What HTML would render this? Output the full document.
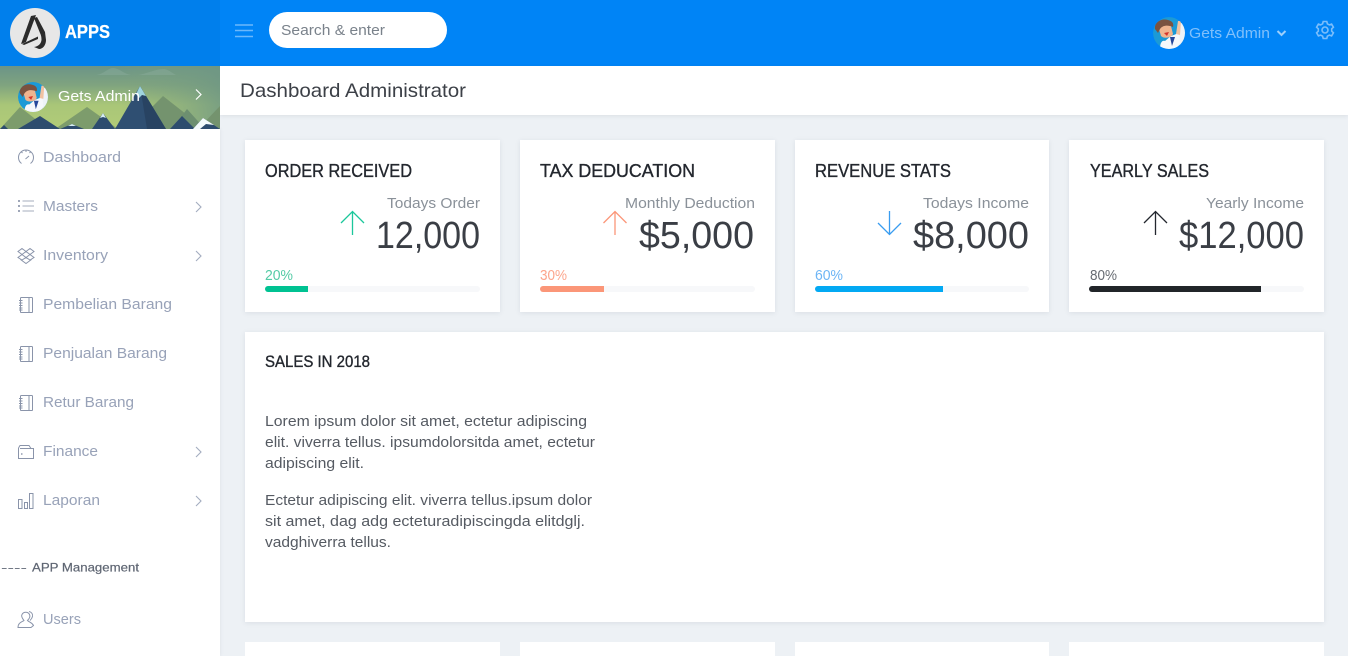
<!DOCTYPE html>
<html lang="en">
<head>
<meta charset="utf-8">
<title>Dashboard Administrator</title>
<style>
html,body{margin:0;padding:0;width:1348px;height:656px;overflow:hidden;background:#edf1f5}
#root{position:relative;width:1348px;height:656px;overflow:hidden;background:#edf1f5}
.a{position:absolute}
.card{position:absolute;background:#fff;box-shadow:0 1px 5px rgba(60,70,90,.10)}
svg text{font-family:"Liberation Sans",sans-serif}
.m{font-size:14.5px;fill:#98a2b8}
.t{font-size:18.5px;fill:#23272e;stroke:#23272e;stroke-width:.35}
.s{font-size:14.5px;fill:#8a9199}
.n{font-size:38px;fill:#3a3e45}
.p{font-size:14.5px}
.b{font-size:14.5px;fill:#555a62}
.i{fill:none;stroke:#8a94aa;stroke-width:1}
.c{fill:none;stroke:#a4adc0;stroke-width:1.1}
</style>
</head>
<body>
<div id="root">
<div class="a" style="left:220px;top:0;width:1128px;height:66px;background:#0084f6"></div>
<div class="a" style="left:0;top:0;width:220px;height:66px;background:#007fec"></div>
<div class="a" style="left:220px;top:66px;width:1128px;height:49px;background:#fff;box-shadow:0 1px 4px rgba(60,70,90,.10)"></div>
<div class="a" style="left:0;top:129px;width:220px;height:527px;background:#fff;box-shadow:1px 0 3px rgba(60,70,90,.06)"></div>
<div class="a" style="left:269px;top:12px;width:178px;height:36px;border-radius:18px;background:#fff"></div>
<div class="card" style="left:245px;top:140px;width:255px;height:172px"></div>
<div class="card" style="left:520px;top:140px;width:255px;height:172px"></div>
<div class="card" style="left:795px;top:140px;width:254px;height:172px"></div>
<div class="card" style="left:1069px;top:140px;width:255px;height:172px"></div>
<div class="card" style="left:245px;top:332px;width:1079px;height:290px"></div>
<div class="card" style="left:245px;top:642px;width:255px;height:14px;box-shadow:none"></div>
<div class="card" style="left:520px;top:642px;width:255px;height:14px;box-shadow:none"></div>
<div class="card" style="left:795px;top:642px;width:254px;height:14px;box-shadow:none"></div>
<div class="card" style="left:1069px;top:642px;width:255px;height:14px;box-shadow:none"></div>

<svg class="a" style="left:0;top:0" width="1348" height="656" viewBox="0 0 1348 656" xmlns="http://www.w3.org/2000/svg">
<defs>
<linearGradient id="sky" x1="0" y1="0" x2="0" y2="1">
<stop offset="0" stop-color="#6b9488"/><stop offset=".3" stop-color="#7fa37f"/><stop offset=".62" stop-color="#a9c678"/><stop offset="1" stop-color="#b2cc78"/>
</linearGradient>
<linearGradient id="skyr" x1="0" y1="0" x2="1" y2="0">
<stop offset="0" stop-color="#7fa37f" stop-opacity="0"/><stop offset=".55" stop-color="#7fa37f" stop-opacity="0"/><stop offset="1" stop-color="#6f9784" stop-opacity=".8"/>
</linearGradient>
<clipPath id="ban"><rect x="0" y="66" width="220" height="63"/></clipPath>
<clipPath id="av1"><circle cx="33" cy="97" r="15"/></clipPath>
<clipPath id="av2"><circle cx="1169" cy="33" r="16"/></clipPath>
<g id="kid">
<circle cx="0" cy="0" r="16" fill="#1b9ad6"/>
<path d="M11 -10L16 -10V16H4Z" fill="#eef3f8"/>
<path d="M-9 16C-9 10 -7 7 -4 8L2 3L10 0L11 10L6 16Z" fill="#f6f8fb"/>
<path d="M1 4L3 13L6 4Z" fill="#27479a"/>
<path d="M-10 -4C-8 -8 -2 -9 2 -7L4 1C2 5 -5 6 -8 3Z" fill="#f0b48f"/>
<path d="M-14 -4C-15 -11 -7 -15 -1 -13C3 -12 5 -10 4 -6C-1 -8 -6 -8 -9 -4L-11 0Z" fill="#7a5240"/>
<path d="M-5 0L0 -1L-2 3Z" fill="#d5352b"/>
<path d="M7 1L9 -12L12 -12L11 2Z" fill="#f0c2a2"/>
</g>
<g id="book" class="i">
<rect x="20.5" y=".5" width="12" height="15" rx=".8"/>
<path d="M29 .5V15.5M19 3.5H22.5M19 6H22.5M19 8.5H22.5M19 11H22.5M19 13H22.5" />
</g>
<path id="chev" d="M-3 -5L2 0L-3 5" fill="none"/>
</defs>

<!-- logo -->
<circle cx="35" cy="33" r="25" fill="#e7e7e7"/>
<path d="M31 16L36 15L26 42L21 44Z" fill="#2b2b2b"/>
<path d="M22 44L38 36.5L38 39L24 45Z" fill="#2b2b2b"/>
<path d="M34 18L37 17L45 32L46 40C46 45 43 49 39 49L34 47C38 46.5 41 44 41.5 40C41.5 37 41 35 40 33Z" fill="#2b2b2b"/>
<text x="65" y="38" font-size="18" font-weight="700" fill="#fff" stroke="#fff" stroke-width=".3" textLength="45" lengthAdjust="spacingAndGlyphs">APPS</text>

<!-- user banner -->
<g clip-path="url(#ban)">
<rect x="0" y="66" width="220" height="63" fill="url(#sky)"/>
<rect x="0" y="66" width="220" height="63" fill="url(#skyr)"/>
<path d="M96 75C104 74 108 68 113 68C119 68 124 74 131 75Z" fill="#8fb0a0" opacity=".4"/>
<path d="M138 75C146 74 156 69 163 69C168 69 172 73 176 75Z" fill="#8fb0a0" opacity=".4"/>
<path d="M0 129L20 107L48 129Z" fill="#7d9c6c"/>
<path d="M55 129L87 107L118 129Z" fill="#7d9c6c"/>
<path d="M130 129L163 96L205 129Z" fill="#74936e"/>
<path d="M172 129L187 109L205 129Z" fill="#6d8f70"/>
<path d="M198 129L220 106V129Z" fill="#74936e"/>
<path d="M18 129L40 116L60 129Z" fill="#2d4c6e"/>
<path d="M0 129L4 125L8 129Z" fill="#2d4c6e"/>
<path d="M60 129L72 124L84 129Z" fill="#2d4c6e"/>
<path d="M92 129L103 113L115 129Z" fill="#2d4c6e"/>
<path d="M115 129L140 86L166 129Z" fill="#2f4f72"/>
<path d="M140 86L166 129H147Z" fill="#284362"/>
<path d="M170 129L182 116L195 129Z" fill="#2d4c6e"/>
<path d="M193 129L203 118L220 129Z" fill="#2d4c6e"/>
<path d="M136 94L140 86L146 96L142 95L139 98Z" fill="#9fd4de"/>
<path d="M100 118L103 113L106 118L103 117Z" fill="#d6edf2"/>
<path d="M193 129L203 118L214 125L206 124L200 129Z" fill="#f3fafb"/>
<path d="M68 126L72 124L76 126Z" fill="#d6edf2"/>
</g>
<g clip-path="url(#av1)"><use href="#kid" transform="translate(33 97) scale(.94)"/></g>
<text x="58" y="101" font-size="14.5" fill="#fff" textLength="82" lengthAdjust="spacingAndGlyphs">Gets Admin</text>
<use href="#chev" transform="translate(199 94.5)" stroke="#fff" stroke-width="1.2"/>

<!-- top bar -->
<path d="M235 25H253M235 30.5H253M235 36.5H253" stroke="#6cb8fb" stroke-width="1.6" fill="none"/>
<text x="281" y="35" font-size="15" fill="#7a828b" textLength="104" lengthAdjust="spacingAndGlyphs">Search &amp; enter</text>
<g clip-path="url(#av2)"><use href="#kid" transform="translate(1169 33)"/></g>
<text x="1189" y="38" font-size="14.5" fill="#80c0fb" textLength="81" lengthAdjust="spacingAndGlyphs">Gets Admin</text>
<path d="M1277.5 31L1281.5 35L1285.5 31" fill="none" stroke="#9ccffb" stroke-width="2"/>
<g transform="translate(1325 30)" fill="none" stroke="#7cbefb" stroke-width="1.6">
<circle r="3"/>
<path d="M-1.8 -8.5H1.8L2.4 -6.2L4.4 -5.1L6.6 -5.9L8.4 -2.8L6.7 -1.2V1.2L8.4 2.8L6.6 5.9L4.4 5.1L2.4 6.2L1.8 8.5H-1.8L-2.4 6.2L-4.4 5.1L-6.6 5.9L-8.4 2.8L-6.7 1.2V-1.2L-8.4 -2.8L-6.6 -5.9L-4.4 -5.1L-2.4 -6.2Z"/>
</g>

<!-- page heading -->
<text x="240" y="97" font-size="19.5" fill="#3c4047" textLength="226" lengthAdjust="spacingAndGlyphs">Dashboard Administrator</text>

<!-- sidebar menu -->
<text class="m" x="43" y="162" textLength="78" lengthAdjust="spacingAndGlyphs">Dashboard</text>
<text class="m" x="43" y="211" textLength="55" lengthAdjust="spacingAndGlyphs">Masters</text>
<text class="m" x="43" y="260" textLength="65" lengthAdjust="spacingAndGlyphs">Inventory</text>
<text class="m" x="43" y="309" textLength="129" lengthAdjust="spacingAndGlyphs">Pembelian Barang</text>
<text class="m" x="43" y="358" textLength="124" lengthAdjust="spacingAndGlyphs">Penjualan Barang</text>
<text class="m" x="43" y="407" textLength="91" lengthAdjust="spacingAndGlyphs">Retur Barang</text>
<text class="m" x="43" y="456" textLength="55" lengthAdjust="spacingAndGlyphs">Finance</text>
<text class="m" x="43" y="505" textLength="57" lengthAdjust="spacingAndGlyphs">Laporan</text>
<text x="1" y="571.5" font-size="11.5" fill="#6b7280" textLength="26" lengthAdjust="spacingAndGlyphs">----</text>
<text x="32" y="571.5" font-size="11.5" fill="#5f6673" stroke="#5f6673" stroke-width=".2" textLength="107" lengthAdjust="spacingAndGlyphs">APP Management</text>
<text class="m" x="43" y="624" textLength="38" lengthAdjust="spacingAndGlyphs">Users</text>

<use href="#chev" class="c" transform="translate(199 207)"/>
<use href="#chev" class="c" transform="translate(199 256)"/>
<use href="#chev" class="c" transform="translate(199 452)"/>
<use href="#chev" class="c" transform="translate(199 501)"/>

<!-- icons -->
<g class="i">
<path d="M21.5 163.5A7.5 7.5 0 1 1 30.5 163.5M21 151.5L22.5 153M26 150V152M31 151.5L29.5 153"/>
<path d="M25.5 159L29 156"/>
<path d="M18 201H20M18 206H20M18 211H20" stroke-width="1.6" stroke="#7f89a0"/>
<path d="M22.5 201H34M22.5 206H34M22.5 211H34" stroke="#b6bdcb" stroke-width="1.2"/>
<path d="M22 248.5L26 251.5L30 248.5L34 251.5L30 254.5L34 257.5L30 260L26 257.5L22 260L18 257.5L22 254.5L18 251.5Z"/>
<path d="M22 254.5L26 251.5L30 254.5L26 257.5ZM20.5 259.5L26 263.5L31.5 259.5"/>
<use href="#book" transform="translate(0 297)"/>
<use href="#book" transform="translate(0 346)"/>
<use href="#book" transform="translate(0 395)"/>
<path d="M18.5 448V458.5H33.5V448.5H20M18.5 448L20 445.5H29L31 448.5"/>
<path d="M21 454H22.5" stroke-width="1.4"/>
<path d="M18.5 499.5H22V508.5H18.5ZM24.5 502.5H27.5V508.5H24.5ZM29.5 493.5H33V508.5H29.5Z"/>
<path d="M18 627.5C18 622.5 22 622 24 620.5C22 618 21 616 22 614.5C23.5 611.5 28 611.5 29.5 614.5C30.5 616.5 29.5 618.5 27.5 620.5C29.5 622.5 32 622.5 33.5 625.5L31 627.5Z"/>
<path d="M29 611.5C31.5 612 33 614 32.5 616.5C32 618.5 31 619.5 30 620.5"/>
</g>

<!-- stat card 1 -->
<text class="t" x="265" y="177" textLength="147" lengthAdjust="spacingAndGlyphs">ORDER RECEIVED</text>
<text class="s" x="387" y="208" textLength="93" lengthAdjust="spacingAndGlyphs">Todays Order</text>
<text class="n" x="376" y="248" textLength="104" lengthAdjust="spacingAndGlyphs">12,000</text>
<path d="M352.5 235V212M341 223L352.5 211.5L364 223" fill="none" stroke="#1cc79b" stroke-width="1.3"/>
<text class="p" x="265" y="280" fill="#55cba6" textLength="28" lengthAdjust="spacingAndGlyphs">20%</text>
<rect x="265" y="286" width="215" height="6" rx="3" fill="#f7f8fa"/>
<path d="M268 286H308V292H268A3 3 0 0 1 268 286Z" fill="#00c292"/>

<!-- stat card 2 -->
<text class="t" x="540" y="177" textLength="155" lengthAdjust="spacingAndGlyphs">TAX DEDUCATION</text>
<text class="s" x="625" y="208" textLength="130" lengthAdjust="spacingAndGlyphs">Monthly Deduction</text>
<text class="n" x="639" y="248" textLength="115" lengthAdjust="spacingAndGlyphs">$5,000</text>
<path d="M615 235V212M603.5 223L615 211.5L626.5 223" fill="none" stroke="#fb9678" stroke-width="1.3"/>
<text class="p" x="540" y="280" fill="#fca58c" textLength="27" lengthAdjust="spacingAndGlyphs">30%</text>
<rect x="540" y="286" width="215" height="6" rx="3" fill="#f7f8fa"/>
<path d="M543 286H604V292H543A3 3 0 0 1 543 286Z" fill="#fb9678"/>

<!-- stat card 3 -->
<text class="t" x="815" y="177" textLength="136" lengthAdjust="spacingAndGlyphs">REVENUE STATS</text>
<text class="s" x="923" y="208" textLength="106" lengthAdjust="spacingAndGlyphs">Todays Income</text>
<text class="n" x="913" y="248" textLength="116" lengthAdjust="spacingAndGlyphs">$8,000</text>
<path d="M889.5 211V234M878 223L889.5 234.5L901 223" fill="none" stroke="#3a9df0" stroke-width="1.3"/>
<text class="p" x="815" y="280" fill="#6db5f5" textLength="28" lengthAdjust="spacingAndGlyphs">60%</text>
<rect x="815" y="286" width="214" height="6" rx="3" fill="#f7f8fa"/>
<path d="M818 286H943V292H818A3 3 0 0 1 818 286Z" fill="#03a9f3"/>

<!-- stat card 4 -->
<text class="t" x="1090" y="177" textLength="119" lengthAdjust="spacingAndGlyphs">YEARLY SALES</text>
<text class="s" x="1206" y="208" textLength="98" lengthAdjust="spacingAndGlyphs">Yearly Income</text>
<text class="n" x="1179" y="248" textLength="125" lengthAdjust="spacingAndGlyphs">$12,000</text>
<path d="M1155.5 235V212M1144 223L1155.5 211.5L1167 223" fill="none" stroke="#23272e" stroke-width="1.3"/>
<text class="p" x="1090" y="280" fill="#666b72" textLength="27" lengthAdjust="spacingAndGlyphs">80%</text>
<rect x="1089" y="286" width="215" height="6" rx="3" fill="#f7f8fa"/>
<path d="M1092 286H1261V292H1092A3 3 0 0 1 1092 286Z" fill="#212529"/>

<!-- sales -->
<text x="265" y="367" font-size="16.5" fill="#23272e" stroke="#23272e" stroke-width=".35" textLength="105" lengthAdjust="spacingAndGlyphs">SALES IN 2018</text>
<text class="b" x="265" y="426" textLength="322" lengthAdjust="spacingAndGlyphs">Lorem ipsum dolor sit amet, ectetur adipiscing</text>
<text class="b" x="265" y="447" textLength="330" lengthAdjust="spacingAndGlyphs">elit. viverra tellus. ipsumdolorsitda amet, ectetur</text>
<text class="b" x="265" y="468" textLength="99" lengthAdjust="spacingAndGlyphs">adipiscing elit.</text>
<text class="b" x="265" y="505" textLength="327" lengthAdjust="spacingAndGlyphs">Ectetur adipiscing elit. viverra tellus.ipsum dolor</text>
<text class="b" x="265" y="526" textLength="320" lengthAdjust="spacingAndGlyphs">sit amet, dag adg ecteturadipiscingda elitdglj.</text>
<text class="b" x="265" y="547" textLength="126" lengthAdjust="spacingAndGlyphs">vadghiverra tellus.</text>
</svg>
</div>
</body>
</html>
